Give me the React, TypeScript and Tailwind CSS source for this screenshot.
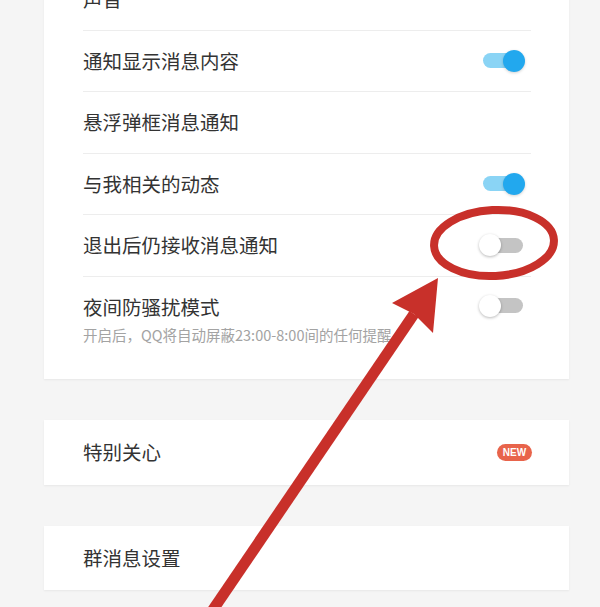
import React from 'react';

const font = { fontFamily: '"Noto Sans CJK SC", "Noto Sans", sans-serif' };

function Toggle({ on }: { on: boolean }) {
  return (
    <div className="relative w-[46px] h-[24px] shrink-0">
      <div
        className={`absolute left-[4px] right-[2px] top-[4.5px] h-[15px] rounded-full ${
          on ? 'bg-[#8ad4f5]' : 'bg-[#c4c4c4]'
        }`}
      />
      <div
        className={`absolute top-[1px] w-[22px] h-[22px] rounded-full ${
          on
            ? 'right-0 bg-[#22a8ee] shadow-[0_1px_3px_rgba(0,0,0,0.18)]'
            : 'left-0 bg-white shadow-[0_1px_3px_rgba(0,0,0,0.28)]'
        }`}
      />
    </div>
  );
}

interface RowProps {
  label: string;
  toggle?: boolean;
}

function Row({ label, toggle }: RowProps) {
  return (
    <div className="flex items-center justify-between h-[61.5px] border-b border-[#ededed]">
      <span className="text-[19.5px] leading-[26px] text-[#333]">{label}</span>
      {toggle !== undefined && (
        <div className="mr-[6px]">
          <Toggle on={toggle} />
        </div>
      )}
    </div>
  );
}

export default function App() {
  return (
    <div className="relative w-[600px] h-[607px] overflow-hidden bg-[#f5f5f5]" style={font}>
      <div className="ml-[44px] mr-[31px] mt-[-31px] bg-white shadow-[0_1px_2px_rgba(0,0,0,0.06)] pl-[39px] pr-[38px]">
        <Row label="声音" />
        <Row label="通知显示消息内容" toggle={true} />
        <Row label="悬浮弹框消息通知" />
        <Row label="与我相关的动态" toggle={true} />
        <Row label="退出后仍接收消息通知" toggle={false} />
        <div className="flex items-start justify-between pt-[17px] pb-[35px]">
          <div>
            <div className="text-[19.5px] leading-[26px] text-[#333]">夜间防骚扰模式</div>
            <div className="mt-[6px] text-[14.5px] leading-[18px] text-[#a3a3a3]">
              开启后，QQ将自动屏蔽23:00-8:00间的任何提醒
            </div>
          </div>
          <div className="mr-[6px]">
            <Toggle on={false} />
          </div>
        </div>
      </div>

      <div className="ml-[44px] mr-[31px] mt-[41px] h-[65px] bg-white shadow-[0_1px_2px_rgba(0,0,0,0.06)] pl-[39px] pr-[37px] flex items-center justify-between">
        <span className="text-[19.5px] leading-[26px] text-[#333]">特别关心</span>
        <span
          className="h-[17px] w-[35px] rounded-full bg-[#e8644b] text-white text-[10px] leading-[17px] text-center font-semibold"
          style={{ fontFamily: '"Liberation Sans", Arial, sans-serif' }}
        >
          NEW
        </span>
      </div>

      <div className="ml-[44px] mr-[31px] mt-[41px] h-[64px] bg-white shadow-[0_1px_2px_rgba(0,0,0,0.06)] pl-[39px] flex items-center">
        <span className="text-[19.5px] leading-[26px] text-[#333]">群消息设置</span>
      </div>

      {/* red annotation */}
      <svg className="absolute inset-0 pointer-events-none" width="600" height="607" viewBox="0 0 600 607">
        <ellipse
          cx="494"
          cy="243"
          rx="60"
          ry="33"
          fill="none"
          stroke="#c8302a"
          strokeWidth="8"
          transform="rotate(-3 494 243)"
        />
        <line x1="206" y1="620" x2="414" y2="314" stroke="#c8302a" strokeWidth="11" />
        <polygon points="438,278 433,333 414,314 392,303" fill="#c8302a" />
      </svg>
    </div>
  );
}
